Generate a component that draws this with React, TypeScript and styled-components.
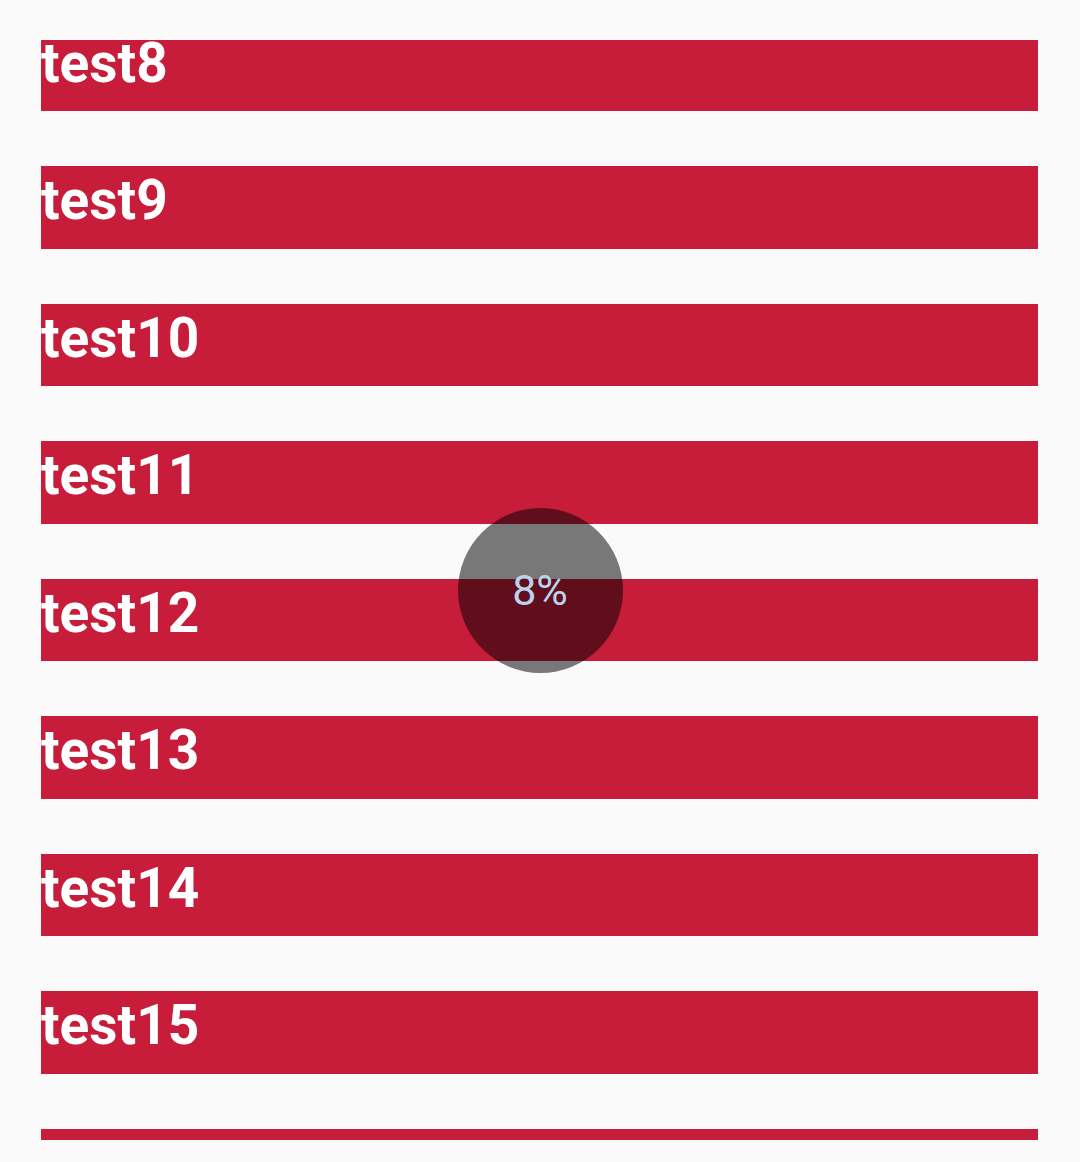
import React, { useLayoutEffect, useRef } from "react";
import styled, { createGlobalStyle } from "styled-components";

const Global = createGlobalStyle`
  html, body { margin: 0; padding: 0; background: #fafafa; }
  body { font-family: Roboto, "Noto Sans", sans-serif; }
`;

const Page = styled.div`
  position: relative;
  width: 1080px;
  height: 1162px;
  box-sizing: border-box;
  padding: 40px 42px 22px 41px;
  background: #fafafa;
  overflow: hidden;
`;

const Scroller = styled.div`
  height: 1100px;
  overflow: hidden;
`;

const List = styled.div`
  display: flex;
  flex-direction: column;
  gap: 55px;
`;

const Row = styled.div`
  flex: 0 0 82.5px;
  height: 82.5px;
  box-sizing: border-box;
  padding-top: 2px;
  background: #c81c3b;
  color: #ffffff;
  font-family: Roboto, sans-serif;
  font-weight: 700;
  font-size: 55px;
  line-height: normal;
  overflow: hidden;
`;

const Progress = styled.div`
  position: absolute;
  left: 457.5px;
  top: 507.5px;
  width: 165px;
  height: 165px;
  border-radius: 50%;
  background: rgba(0, 0, 0, 0.52);
  display: flex;
  align-items: center;
  justify-content: center;
  color: #bad4ee;
  font-family: Roboto, sans-serif;
  font-size: 43px;
  font-weight: 400;
`;

const items = Array.from({ length: 20 }, (_, i) => `test${i + 1}`);

export default function App() {
  const ref = useRef<HTMLDivElement>(null);
  useLayoutEffect(() => {
    if (ref.current) ref.current.scrollTop = 974;
  }, []);
  return (
    <>
      <Global />
      <Page>
        <Scroller ref={ref}>
          <List>
            {items.map((t) => (
              <Row key={t}>{t}</Row>
            ))}
          </List>
        </Scroller>
        <Progress>8%</Progress>
      </Page>
    </>
  );
}
